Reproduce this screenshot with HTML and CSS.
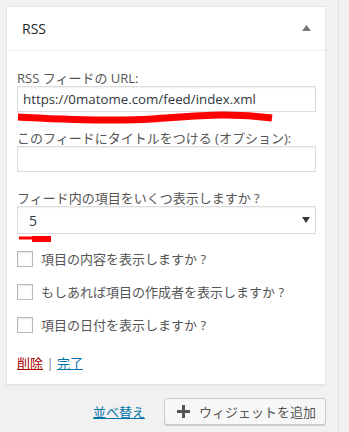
FILE: index.html
```html
<!DOCTYPE html>
<html lang="ja">
<head>
    <meta charset="UTF-8">
    <meta name="viewport" content="width=device-width, initial-scale=1.0">
    <title>RSS ウィジェット</title>
    <link rel="stylesheet" href="styles.css">
</head>
<body>
    <div class="sidebar">
        <div class="widget">
            <div class="widget-top">
                <h3 class="widget-title">RSS</h3>
                <svg class="toggle" width="9" height="6" viewBox="0 0 9 6"><path d="M4.5 0 L9 6 L0 6 Z" fill="#72777c"/></svg>
            </div>
            <form class="widget-inside">
                <div class="field first">
                    <label for="rss-url">RSS フィードの URL:</label>
                    <input type="text" id="rss-url" class="text-input" value="https://0matome.com/feed/index.xml">
                    <svg class="scribble" width="260" height="14" viewBox="0 0 260 14">
                        <path d="M1 6 C 40 8, 90 11, 135 8 S 210 1, 255 7" stroke="#ff0000" stroke-width="7" fill="none" stroke-linecap="butt"/>
                    </svg>
                </div>
                <div class="field">
                    <label for="rss-title">このフィードにタイトルをつける (オプション):</label>
                    <input type="text" id="rss-title" class="text-input">
                </div>
                <div class="field">
                    <label>フィード内の項目をいくつ表示しますか ?</label>
                    <div class="select">
                        <span>5</span>
                        <svg width="8" height="6" viewBox="0 0 8 6"><path d="M0 0 L8 0 L4 6 Z" fill="#32373c"/></svg>
                    </div>
                    <svg class="scribble small" width="36" height="10" viewBox="0 0 36 10">
                        <path d="M1 4 L16 4" stroke="#ff0000" stroke-width="3" fill="none"/>
                        <path d="M14 5 L33 5" stroke="#ff0000" stroke-width="6" fill="none"/>
                    </svg>
                </div>
                <div class="checks">
                    <label class="check"><input type="checkbox"> 項目の内容を表示しますか ?</label>
                    <label class="check"><input type="checkbox"> もしあれば項目の作成者を表示しますか ?</label>
                    <label class="check"><input type="checkbox"> 項目の日付を表示しますか ?</label>
                </div>
                <div class="actions">
                    <a href="#" class="delete">削除</a> <span class="sep">|</span> <a href="#" class="done">完了</a>
                </div>
            </form>
        </div>
        <div class="footer">
            <a href="#" class="reorder">並べ替え</a>
            <button type="button" class="add-widget">
                <svg width="13" height="13" viewBox="0 0 13 13"><path d="M6.5 0 V13 M0 6.5 H13" stroke="#555" stroke-width="3"/></svg>
                <span>ウィジェットを追加</span>
            </button>
        </div>
    </div>
</body>
</html>
```

FILE: styles.css
```css
body {
    margin: 0;
    background-color: #f1f1f1;
    font-family: "Open Sans", "Noto Sans CJK JP", sans-serif;
    font-size: 13px;
    color: #555;
}
.sidebar {
    width: 332px;
    height: 432px;
    padding: 6px 0 0 6px;
    border-right: 1px solid #ddd;
    box-sizing: content-box;
}
.widget {
    width: 320px;
    box-sizing: border-box;
    background-color: #fff;
    border: 1px solid #e5e5e5;
    box-shadow: 0 1px 1px rgba(0, 0, 0, 0.04);
}
.widget-top {
    height: 43px;
    border-bottom: 1px solid #eee;
    display: flex;
    align-items: center;
    justify-content: space-between;
    padding: 0 14px 0 15px;
}
.widget-title {
    margin: 0;
    font-size: 14px;
    font-weight: 400;
    color: #23282d;
}
.toggle {
    margin-top: -2px;
}
.widget-inside {
    padding: 19px 9px 12px 10px;
}
.field {
    position: relative;
    margin-bottom: 18px;
}
.field label {
    display: block;
    line-height: 16px;
    white-space: nowrap;
}
.text-input {
    display: block;
    width: 100%;
    height: 26px;
    box-sizing: border-box;
    margin: 0;
    padding: 0 5px;
    border: 1px solid #ddd;
    box-shadow: inset 0 1px 2px rgba(0, 0, 0, 0.07);
    font-family: inherit;
    font-size: 13.3px;
    color: #32373c;
}
.select {
    height: 28px;
    box-sizing: border-box;
    border: 1px solid #ddd;
    box-shadow: inset 0 1px 2px rgba(0, 0, 0, 0.07);
    display: flex;
    align-items: center;
    justify-content: space-between;
    padding: 0 5px 0 11px;
    font-size: 14px;
    color: #32373c;
}
.scribble {
    position: absolute;
    left: 0;
    top: 41px;
}
.scribble.small {
    left: 1px;
    top: 44px;
}
.checks {
    display: flex;
    flex-direction: column;
    gap: 17px;
    margin-top: -1px;
}
.check {
    display: flex;
    align-items: center;
    gap: 8px;
    line-height: 16px;
    white-space: nowrap;
}
.check input {
    appearance: none;
    width: 16px;
    height: 16px;
    margin: 0;
    border: 1px solid #b4b9be;
    box-shadow: inset 0 1px 2px rgba(0, 0, 0, 0.1);
    background-color: #fff;
}
.actions {
    margin-top: 21px;
    line-height: 18px;
}
.actions a {
    text-decoration: underline;
}
.delete {
    color: #a00;
}
.done {
    color: #0073aa;
}
.sep {
    color: #72777c;
}
.footer {
    width: 320px;
    display: flex;
    justify-content: flex-end;
    align-items: center;
    gap: 19px;
    margin-top: 13px;
}
.reorder {
    color: #0073aa;
    text-decoration: underline;
}
.add-widget {
    width: 162px;
    height: 27px;
    display: flex;
    align-items: center;
    gap: 9px;
    padding: 0 0 0 12px;
    white-space: nowrap;
    background-color: #f7f7f7;
    border: 1px solid #ccc;
    border-radius: 3px;
    box-shadow: 0 1px 0 #ccc;
    font-family: inherit;
    font-size: 13px;
    color: #555;
}
.add-widget svg {
    flex: none;
}
```
